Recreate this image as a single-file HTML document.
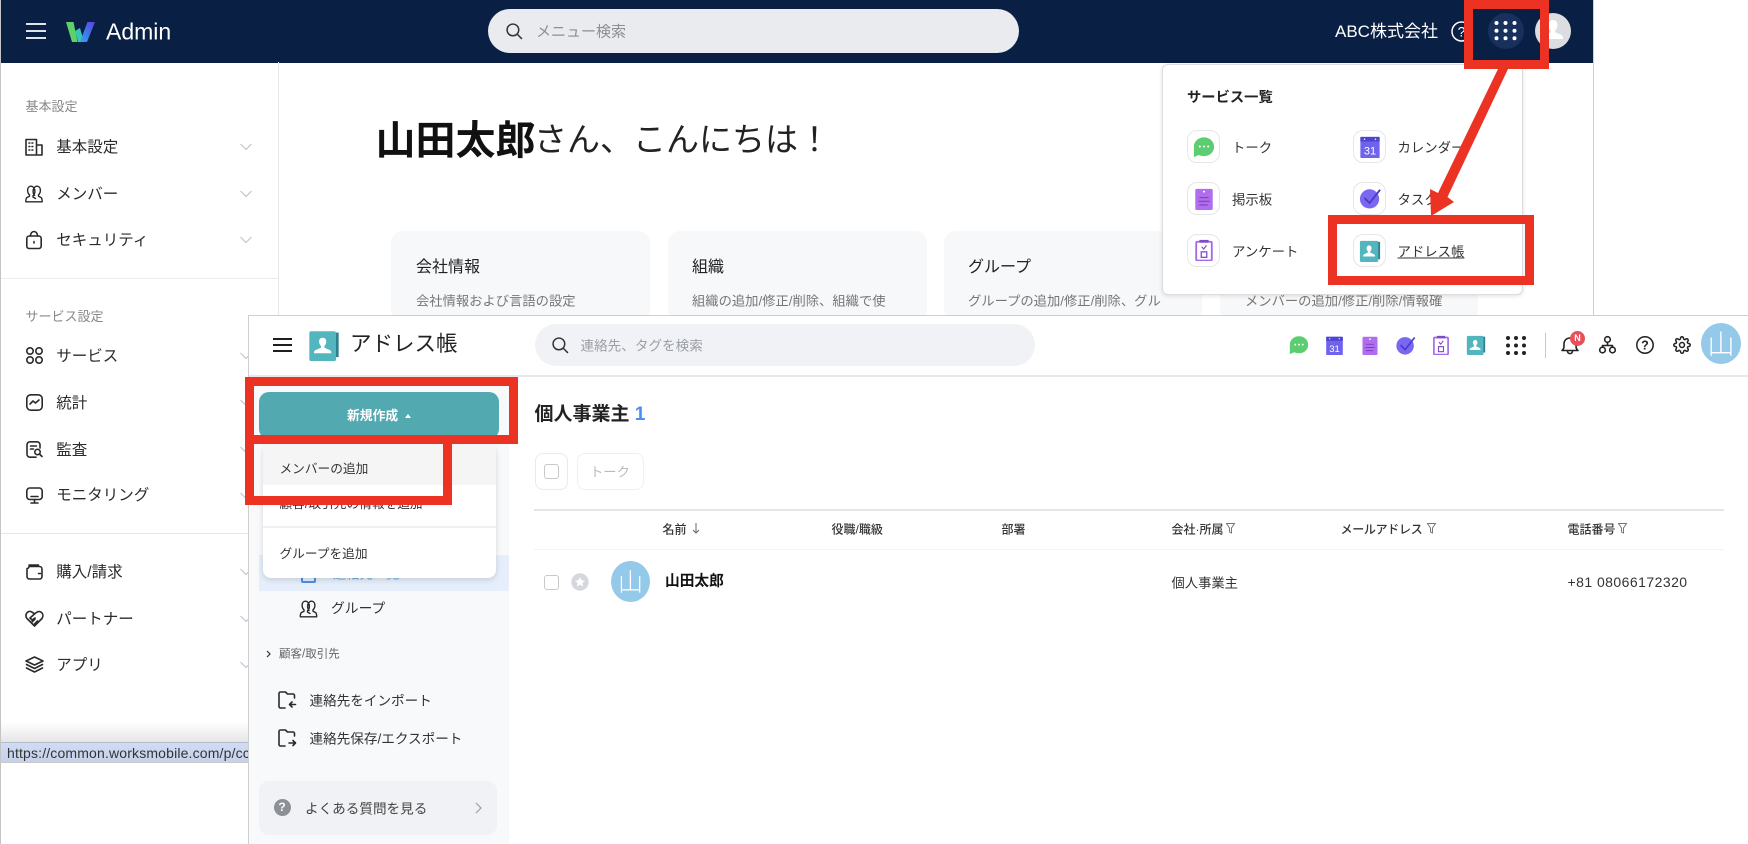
<!DOCTYPE html>
<html lang="ja"><head><meta charset="utf-8"><title>Admin</title>
<style>
html,body{margin:0;padding:0;background:#fff}
body{width:1748px;height:844px;overflow:hidden;position:relative;font-family:"Liberation Sans","Noto Sans CJK JP",sans-serif;color:#222}
.b{position:absolute;box-sizing:border-box}
.t{position:absolute;white-space:nowrap;transform:translateY(calc(-50% + 1.2px));line-height:1.3}
svg{position:absolute;overflow:visible}
.lbl{font-size:13px;color:#888}
.it{font-size:15.5px;color:#2b2b2b;left:56.300px}
.ic{fill:none;stroke:#2a2a2a;stroke-width:1.6;stroke-linecap:round;stroke-linejoin:round}
.card{position:absolute;top:231px;height:90px;background:#f7f8fa;border-radius:12px}
.ct{font-size:16px;color:#222}
.cs{font-size:13.3px;color:#777}
.tile{position:absolute;width:33px;height:33px;box-sizing:border-box;border:1px solid #e6e6e6;border-radius:10px;background:#fff}
.sl{font-size:13.4px;color:#333}
.red{position:absolute;box-sizing:border-box;border:9px solid #ec3223}
.th{font-size:12px;color:#333;font-weight:500;top:529px}
.cb{position:absolute;box-sizing:border-box;width:15px;height:15px;border:1px solid #c9c9c9;border-radius:3px;background:#fff}
</style></head><body>
<svg width="0" height="0" style="position:absolute">
<defs>
<symbol id="talk" viewBox="0 0 24 24"><path d="M12 1.500C5.600 1.500 1 6 1 11.600V23l5.400-2.300c1.600.8 3.500 1.200 5.600 1.200 6.400 0 11-4.500 11-10.200S18.400 1.500 12 1.500z" fill="#5ccd70"/><circle cx="7.500" cy="11.500" r="1.100" fill="#fff"/><circle cx="12" cy="11.500" r="1.100" fill="#fff"/><circle cx="16.500" cy="11.500" r="1.100" fill="#fff"/></symbol>
<symbol id="cal" viewBox="0 0 24 24"><rect x="1.500" y="1" width="21" height="23" rx="1" fill="#6f63ee"/><rect x="1.500" y="1" width="21" height="5" fill="#4f43cf"/><circle cx="6" cy="3.500" r=".8" fill="#fff"/><circle cx="18" cy="3.500" r=".8" fill="#fff"/><text x="12" y="20" font-size="12" text-anchor="middle" fill="#fff" font-family="Liberation Sans">31</text></symbol>
<symbol id="board" viewBox="0 0 24 24"><rect x="2.500" y="1" width="19" height="23" rx="1.500" fill="#b06eee"/><circle cx="12" cy="4" r="1.100" fill="#fff"/><path d="M7 10.500h10M6 14.500h12M7 18.500h9" stroke="#7b3fc4" stroke-width="1.200"/></symbol>
<symbol id="task" viewBox="0 0 24 24"><circle cx="11.500" cy="13" r="10.500" fill="#7a68f2"/><path d="M6 12l5.500 5.500L23 3" fill="none" stroke="#4a3cc4" stroke-width="2"/></symbol>
<symbol id="survey" viewBox="0 0 24 24"><rect x="3.500" y="3" width="17" height="20.500" rx="1" fill="#fff" stroke="#a668e8" stroke-width="2"/><rect x="7" y="1" width="10" height="3" fill="#7f4cc9"/><path d="M9.500 8.500l2.200 2.500 3-4" fill="none" stroke="#7f4cc9" stroke-width="1.300"/><rect x="9" y="14" width="6" height="6" fill="none" stroke="#7f4cc9" stroke-width="1.400"/></symbol>
<symbol id="addr" viewBox="0 0 24 24"><path d="M20 2h3v19h-3z" fill="#2f7f8f"/><rect x="1" y="1" width="20" height="23" rx="1.500" fill="#53b5bd"/><path d="M11 6c1.800 0 2.700 1.300 2.700 3 0 1.500-.6 2.600-1.400 3.300v1.400l4 1.800c.9.500 1.200 1.300 1.200 2.500H4.500c0-1.200.3-2 1.200-2.500l4-1.800v-1.400C8.900 11.600 8.300 10.500 8.300 9c0-1.700.9-3 2.700-3z" fill="#fff"/></symbol>
<symbol id="chev" viewBox="0 0 12 8"><path d="M.5 1L6 6.500 11.500 1" fill="none" stroke="#bfc2c7" stroke-width="1.100"/></symbol>
<symbol id="members" viewBox="0 0 18 18"><path d="M9 3.200C8.300 2 7.200 1.200 6 1.200 3.800 1.200 2.600 3 2.600 5.200c0 2 .8 3.600 1.900 4.600v1.400L2 12.500C1.200 13 .8 14 .8 16.800h16.400c0-2.800-.4-3.800-1.200-4.300l-2.500-1.300V9.800c1.100-1 1.900-2.600 1.900-4.600 0-2.200-1.200-4-3.400-4-1.200 0-2.300.8-3 2 .8 1 .9 2 .9 3 0 2-.8 3.600-1.900 4.600v1.300l3 1.600M9 3.200c-.8 1-.9 2-.9 3 0 2 .8 3.600 1.900 4.600" fill="none" stroke="#2a2a2a" stroke-width="1.400" stroke-linejoin="round"/></symbol>
</defs></svg>

<!-- ADMIN WINDOW -->
<div class="b" style="left:0;top:0;width:1px;height:844px;background:#c4c4c4"></div>
<div class="b" style="left:1593px;top:0;width:1px;height:316px;background:#cfcfcf"></div>
<div class="b" style="left:1px;top:0;width:1592px;height:62.500px;background:#0a1f44"></div>
<svg style="left:26px;top:23px" width="20" height="16"><path d="M0 1h20M0 8h20M0 15h20" stroke="#fff" stroke-width="1.800"/></svg>
<svg style="left:66px;top:21px" width="29" height="21"><defs><linearGradient id="wg" x1="0" y1="1" x2="1" y2="0"><stop offset="0" stop-color="#2fa7ee"/><stop offset="1" stop-color="#5a3fe0"/></linearGradient></defs><path d="M0 1h7.500l4 20H6z" fill="#5fd067"/><path d="M9 10l5-3 4 14h-6z" fill="#35c6b5"/><path d="M14 21h7L29 1h-7.500z" fill="url(#wg)"/></svg>
<div class="t" style="left:106px;top:31px;font-size:23px;color:#fff">Admin</div>
<div class="b" style="left:487.500px;top:9px;width:531px;height:44px;border-radius:22px;background:#e9ebef"></div>
<svg style="left:506px;top:23px" width="17" height="17" viewBox="0 0 16 16"><circle cx="6.500" cy="6.500" r="5.500" fill="none" stroke="#333" stroke-width="1.400"/><path d="M10.500 10.500L15 15" stroke="#333" stroke-width="1.400"/></svg>
<div class="t" style="left:536px;top:31px;font-size:15px;color:#8b8f96">メニュー検索</div>
<div class="t" style="left:1335px;top:30.500px;font-size:17px;color:#fff">ABC株式会社</div>
<svg style="left:1451px;top:21px" width="21" height="21"><circle cx="10.500" cy="10.500" r="9.500" fill="none" stroke="#fff" stroke-width="1.500"/><text x="10.500" y="15.500" font-size="14" text-anchor="middle" fill="#fff" font-family="Liberation Sans">?</text></svg>
<div class="b" style="left:1488px;top:13px;width:36px;height:36px;border-radius:50%;background:#17305c"></div>
<svg style="left:1494px;top:21px" width="24" height="20" fill="#fff"><circle cx="2.500" cy="2" r="2"/><circle cx="11.500" cy="2" r="2"/><circle cx="20.500" cy="2" r="2"/><circle cx="2.500" cy="9.700" r="2"/><circle cx="11.500" cy="9.700" r="2"/><circle cx="20.500" cy="9.700" r="2"/><circle cx="2.500" cy="17.300" r="2"/><circle cx="11.500" cy="17.300" r="2"/><circle cx="20.500" cy="17.300" r="2"/></svg>
<svg style="left:1535px;top:13px" width="36" height="36"><circle cx="18" cy="18" r="18" fill="#dcdde0"/><path d="M18 7c3 0 4.500 2.200 4.500 5 0 2.400-1 4.200-2.300 5.300v2l6 2.600c1.300.7 1.800 2 1.800 4.100H8c0-2.100.5-3.400 1.800-4.100l6-2.600v-2c-1.300-1.100-2.300-2.900-2.300-5.300 0-2.800 1.500-5 4.500-5z" fill="#fff"/></svg>

<!-- admin sidebar -->
<div class="b" style="left:278px;top:62px;width:1px;height:254px;background:#e8e8e8"></div>
<div class="b" style="left:1px;top:278px;width:277px;height:1px;background:#ececec"></div>
<div class="b" style="left:1px;top:533px;width:248px;height:1px;background:#e6e6e6"></div>
<div class="t lbl" style="left:25.500px;top:106px">基本設定</div>
<div class="t lbl" style="left:25.500px;top:315.500px">サービス設定</div>
<div class="t it" style="top:147px">基本設定</div>
<div class="t it" style="top:193.500px">メンバー</div>
<div class="t it" style="top:240px">セキュリティ</div>
<div class="t it" style="top:355.500px">サービス</div>
<div class="t it" style="top:403px">統計</div>
<div class="t it" style="top:449.500px">監査</div>
<div class="t it" style="top:495px">モニタリング</div>
<div class="t it" style="top:572px">購入/請求</div>
<div class="t it" style="top:618.500px">パートナー</div>
<div class="t it" style="top:664.500px">アプリ</div>
<svg style="left:240px;top:143px" width="12" height="8"><use href="#chev"/></svg>
<svg style="left:240px;top:190px" width="12" height="8"><use href="#chev"/></svg>
<svg style="left:240px;top:236px" width="12" height="8"><use href="#chev"/></svg>
<svg style="left:240px;top:352px" width="12" height="8"><use href="#chev"/></svg>
<svg style="left:240px;top:399px" width="12" height="8"><use href="#chev"/></svg>
<svg style="left:240px;top:446px" width="12" height="8"><use href="#chev"/></svg>
<svg style="left:240px;top:492px" width="12" height="8"><use href="#chev"/></svg>
<svg style="left:240px;top:568px" width="12" height="8"><use href="#chev"/></svg>
<svg style="left:240px;top:615px" width="12" height="8"><use href="#chev"/></svg>
<svg style="left:240px;top:661px" width="12" height="8"><use href="#chev"/></svg>
<!-- sidebar icons -->
<svg class="ic" style="left:25px;top:138px" width="18" height="18"><path d="M1 1.500h10.500V17H1zM11.500 7H17v10h-5.500"/><path d="M4 5h.8M7 5h.8M4 8.500h.8M7 8.500h.8M4 12h.8M7 12h.8"/></svg>
<svg style="left:25px;top:185px" width="18" height="18"><use href="#members"/></svg>
<svg class="ic" style="left:26px;top:231px" width="16" height="18"><rect x=".8" y="5" width="14.400" height="12.500" rx="2.500"/><path d="M4.500 5c0-6 7-6 7 0"/><path d="M8 10.500v1.500"/></svg>
<svg class="ic" style="left:26px;top:347px" width="17" height="17"><circle cx="4" cy="4" r="3.200"/><circle cx="13" cy="4" r="3.200"/><circle cx="4" cy="13" r="3.200"/><circle cx="13" cy="13" r="3.200"/></svg>
<svg class="ic" style="left:26px;top:394px" width="17" height="17"><rect x=".8" y=".8" width="15.400" height="15.400" rx="4"/><path d="M4 10l3-3 2.500 2L13 6"/></svg>
<svg class="ic" style="left:26px;top:441px" width="17" height="17"><path d="M10 16.200H4A3 3 0 011 13.200V3.800A3 3 0 014 .8h7a3 3 0 013 3V7"/><path d="M4.500 5h6M4.500 8h3"/><circle cx="11.500" cy="11" r="2.700"/><path d="M13.500 13l2.500 2.500"/></svg>
<svg class="ic" style="left:26px;top:487px" width="17" height="17"><rect x=".8" y="1" width="15.400" height="11.500" rx="3"/><path d="M5 9.500h7M8.500 12.500v3M5 16h7"/></svg>
<svg class="ic" style="left:26px;top:564px" width="17" height="16"><path d="M1 4.500V12.500A2.500 2.500 0 003.500 15h10a2.500 2.500 0 002.500-2.500V5A2.500 2.500 0 0013.500 2.500H3A2 2 0 011 4.500M3 1h9.500"/><path d="M12.500 9.500h2"/></svg>
<svg class="ic" style="left:25px;top:610px" width="19" height="17"><path d="M9.500 16L2 8.500C-1 4.500 3 0 6.500 1.800l3 2 2-1.300C15-.5 20 4 17 8.500z"/><path d="M9.500 4L5 8l2 2 3-2M7 12l3-3M9.500 14l3-3"/></svg>
<svg class="ic" style="left:25px;top:656px" width="19" height="17"><path d="M9.500 1L18 5l-8.500 4L1 5z"/><path d="M1.500 8.500l8 4 8-4M1.500 12l8 4 8-4"/></svg>

<!-- main -->
<div class="t" style="left:375.500px;top:140px;font-size:40px;font-weight:700;color:#111">山田太郎</div>
<div class="t" style="left:534px;top:139px;font-size:33px;color:#222">さん、こんにちは！</div>
<div class="card" style="left:391px;width:259px"></div>
<div class="card" style="left:668px;width:259px"></div>
<div class="card" style="left:944px;width:258px"></div>
<div class="card" style="left:1220px;width:258px"></div>
<div class="t ct" style="left:416px;top:267px">会社情報</div>
<div class="t cs" style="left:416px;top:300px">会社情報および言語の設定</div>
<div class="t ct" style="left:692px;top:267px">組織</div>
<div class="t cs" style="left:692px;top:300px">組織の追加/修正/削除、組織で使</div>
<div class="t ct" style="left:968px;top:267px">グループ</div>
<div class="t cs" style="left:968px;top:300px">グループの追加/修正/削除、グル</div>
<div class="t cs" style="left:1245px;top:300px">メンバーの追加/修正/削除/情報確</div>

<!-- service panel -->
<div class="b" style="left:1162px;top:64px;width:361px;height:231px;background:#fff;border:1px solid #ddd;border-radius:6px;box-shadow:0 1px 4px rgba(0,0,0,.12)"></div>
<div class="t" style="left:1187px;top:97px;font-size:14.300px;font-weight:700;color:#222">サービス一覧</div>
<div class="tile" style="left:1187px;top:130px"></div><svg style="left:1193px;top:136px" width="22" height="22" viewBox="0 0 24 24"><use href="#talk"/></svg>
<div class="tile" style="left:1353px;top:130px"></div><svg style="left:1358.500px;top:136px" width="22" height="22" viewBox="0 0 24 24"><use href="#cal"/></svg>
<div class="tile" style="left:1187px;top:182px"></div><svg style="left:1193px;top:188px" width="22" height="22" viewBox="0 0 24 24"><use href="#board"/></svg>
<div class="tile" style="left:1353px;top:182px"></div><svg style="left:1358.500px;top:187px" width="22" height="22" viewBox="0 0 24 24"><use href="#task"/></svg>
<div class="tile" style="left:1187px;top:234px"></div><svg style="left:1193px;top:239px" width="22" height="22" viewBox="0 0 24 24"><use href="#survey"/></svg>
<div class="tile" style="left:1353px;top:234px"></div><svg style="left:1359px;top:240px" width="22" height="22" viewBox="0 0 24 24"><use href="#addr"/></svg>
<div class="t sl" style="left:1232px;top:146.500px">トーク</div>
<div class="t sl" style="left:1397.500px;top:146.500px">カレンダー</div>
<div class="t sl" style="left:1232px;top:198.500px">掲示板</div>
<div class="t sl" style="left:1397.500px;top:198.500px">タスク</div>
<div class="t sl" style="left:1232px;top:250.500px">アンケート</div>
<div class="t sl" style="left:1397.500px;top:250.500px;text-decoration:underline">アドレス帳</div>

<!-- ADDRESS WINDOW -->
<div class="b" style="left:248px;top:315px;width:1500px;height:529px;background:#fff;border-top:1px solid #cfcfcf;border-left:1px solid #cfcfcf"></div>
<div class="b" style="left:249px;top:376px;width:260px;height:468px;background:#f8f9fb"></div>
<div class="b" style="left:249px;top:375px;width:1499px;height:2px;background:#e8e8e8"></div>
<svg style="left:273px;top:338px" width="19" height="14"><path d="M0 1h19M0 7h19M0 13h19" stroke="#1e1e1e" stroke-width="2"/></svg>
<svg style="left:308px;top:330px" width="32" height="31" viewBox="0 0 24 24" preserveAspectRatio="none"><use href="#addr"/></svg>
<div class="t" style="left:350px;top:344px;font-size:21.500px;color:#222">アドレス帳</div>
<div class="b" style="left:535px;top:324px;width:500px;height:42px;border-radius:21px;background:#f1f2f6"></div>
<svg style="left:552px;top:337px" width="17" height="17" viewBox="0 0 16 16"><circle cx="6.500" cy="6.500" r="5.500" fill="none" stroke="#333" stroke-width="1.400"/><path d="M10.500 10.500L15 15" stroke="#333" stroke-width="1.400"/></svg>
<div class="t" style="left:580.500px;top:345px;font-size:13.600px;color:#9a9ea6">連絡先、タグを検索</div>
<svg style="left:1289px;top:335px" width="20" height="20" viewBox="0 0 24 24"><use href="#talk"/></svg>
<svg style="left:1325px;top:336px" width="19" height="19" viewBox="0 0 24 24"><use href="#cal"/></svg>
<svg style="left:1360px;top:336px" width="20" height="19" viewBox="0 0 24 24"><use href="#board"/></svg>
<svg style="left:1395px;top:335px" width="21" height="20" viewBox="0 0 24 24"><use href="#task"/></svg>
<svg style="left:1431px;top:335px" width="20" height="20" viewBox="0 0 24 24"><use href="#survey"/></svg>
<svg style="left:1466px;top:335px" width="20" height="20" viewBox="0 0 24 24"><use href="#addr"/></svg>
<svg style="left:1506px;top:336px" width="20" height="20" fill="#222"><circle cx="2" cy="2" r="2"/><circle cx="10" cy="2" r="2"/><circle cx="18" cy="2" r="2"/><circle cx="2" cy="9.500" r="2"/><circle cx="10" cy="9.500" r="2"/><circle cx="18" cy="9.500" r="2"/><circle cx="2" cy="17" r="2"/><circle cx="10" cy="17" r="2"/><circle cx="18" cy="17" r="2"/></svg>
<div class="b" style="left:1545px;top:333px;width:1px;height:25px;background:#c8c8c8"></div>
<svg class="ic" style="left:1561px;top:336px;stroke:#222" width="18" height="19"><path d="M1 14.500c2-1.500 2-3 2-6.500 0-3.500 2.500-6 6-6s6 2.500 6 6c0 3.500 0 5 2 6.500z"/><path d="M6.500 15c0 3.500 5 3.500 5 0"/></svg>
<div class="b" style="left:1570px;top:331px;width:15px;height:15px;border-radius:50%;background:#e8505b;color:#fff;font-size:9px;line-height:15px;text-align:center;font-weight:700">N</div>
<svg class="ic" style="left:1599px;top:336px;stroke:#222" width="17" height="18"><circle cx="8.500" cy="3.500" r="2.800"/><circle cx="3.500" cy="14" r="2.800"/><circle cx="13.500" cy="14" r="2.800"/><path d="M8.500 6.300V9M3.500 11.200V9.500h10v1.700"/></svg>
<svg style="left:1636px;top:336px" width="18" height="18"><circle cx="9" cy="9" r="8.200" fill="none" stroke="#222" stroke-width="1.500"/><text x="9" y="13.500" font-size="12.500" text-anchor="middle" fill="#222" font-family="Liberation Sans" font-weight="700">?</text></svg>
<svg class="ic" style="left:1673px;top:336px;stroke:#222;stroke-width:2" width="18" height="18" viewBox="0 0 24 24"><circle cx="12" cy="12" r="3.300"/><path d="M19.400 15a1.650 1.650 0 0 0 .33 1.820l.06.06a2 2 0 0 1 0 2.830 2 2 0 0 1-2.830 0l-.06-.06a1.650 1.650 0 0 0-1.820-.33 1.650 1.650 0 0 0-1 1.510V21a2 2 0 0 1-2 2 2 2 0 0 1-2-2v-.09A1.650 1.650 0 0 0 9 19.400a1.650 1.650 0 0 0-1.820.33l-.06.06a2 2 0 0 1-2.830 0 2 2 0 0 1 0-2.830l.06-.06a1.650 1.650 0 0 0 .33-1.820 1.650 1.650 0 0 0-1.510-1H3a2 2 0 0 1-2-2 2 2 0 0 1 2-2h.09A1.650 1.650 0 0 0 4.600 9a1.650 1.650 0 0 0-.33-1.820l-.06-.06a2 2 0 0 1 0-2.830 2 2 0 0 1 2.830 0l.06.06a1.650 1.650 0 0 0 1.820.33H9a1.650 1.650 0 0 0 1-1.510V3a2 2 0 0 1 2-2 2 2 0 0 1 2 2v.09a1.650 1.650 0 0 0 1 1.510 1.650 1.650 0 0 0 1.820-.33l.06-.06a2 2 0 0 1 2.830 0 2 2 0 0 1 0 2.830l-.06.06a1.650 1.650 0 0 0-.33 1.820V9a1.650 1.650 0 0 0 1.510 1H21a2 2 0 0 1 2 2 2 2 0 0 1-2 2h-.09a1.650 1.650 0 0 0-1.510 1z"/></svg>
<div class="b" style="left:1701px;top:323px;width:40px;height:41px;border-radius:50%;background:#94c9ea;color:#fff;text-align:center;font-size:27px;line-height:40px;font-family:'Noto Sans CJK JP',sans-serif;font-weight:300">山</div>

<!-- address sidebar -->
<div class="b" style="left:259px;top:392px;width:240px;height:47px;border-radius:10px;background:#52a9b0"></div>
<div class="t" style="left:347px;top:415px;font-size:12.800px;font-weight:700;color:#fff">新規作成</div>
<svg style="left:405px;top:414px" width="6" height="4"><path d="M0 4L3 0l3 4z" fill="#fff"/></svg>
<div class="b" style="left:259px;top:555px;width:250px;height:36px;background:#e5eefa"></div>
<div class="b" style="left:301px;top:570px;width:15px;height:13px;border:2px solid #4a90e2;border-radius:2px"></div>
<div class="t" style="left:333px;top:573px;font-size:13.300px;color:#6aa5ea">連絡先一覧</div>
<svg style="left:299px;top:600px" width="19" height="18" viewBox="0 0 18 18"><use href="#members"/></svg>
<div class="t" style="left:331px;top:608px;font-size:13.800px;color:#333">グループ</div>
<svg style="left:266px;top:650px" width="5" height="8"><path d="M1 1l3 3-3 3" fill="none" stroke="#333" stroke-width="1.200"/></svg>
<div class="t" style="left:279px;top:653.500px;font-size:11.500px;color:#666">顧客/取引先</div>
<svg class="ic" style="left:278px;top:691px" width="19" height="18"><path d="M16.500 7V4.500a1.500 1.500 0 00-1.500-1.500H9.500L7.500 1H2.500A1.500 1.500 0 001 2.500v13A1.500 1.500 0 002.500 17H7"/><path d="M17.500 13.500h-6M14 11l-2.500 2.500L14 16"/></svg>
<svg class="ic" style="left:278px;top:729px" width="19" height="18"><path d="M16.500 7V4.500a1.500 1.500 0 00-1.500-1.500H9.500L7.500 1H2.500A1.500 1.500 0 001 2.500v13A1.500 1.500 0 002.500 17H7"/><path d="M11 14h6M15 11.500l2.500 2.500-2.500 2.500"/></svg>
<div class="t" style="left:309.500px;top:700px;font-size:13.600px;color:#333">連絡先をインポート</div>
<div class="t" style="left:309.500px;top:738px;font-size:13.600px;color:#333">連絡先保存/エクスポート</div>
<div class="b" style="left:259px;top:781px;width:238px;height:54px;border-radius:10px;background:#f1f2f5"></div>
<div class="b" style="left:273.500px;top:799px;width:17px;height:17px;border-radius:50%;background:#8d9096;color:#fff;font-size:12px;font-weight:700;line-height:17px;text-align:center">?</div>
<div class="t" style="left:305px;top:807.500px;font-size:13.600px;color:#444">よくある質問を見る</div>
<svg style="left:475px;top:802px" width="7" height="12"><path d="M1 1l5 5-5 5" fill="none" stroke="#999" stroke-width="1.100"/></svg>

<!-- dropdown -->
<div class="b" style="left:263px;top:444px;width:233px;height:134px;background:#fff;border-radius:8px;box-shadow:0 2px 6px rgba(0,0,0,.14)"></div>
<div class="b" style="left:263px;top:444px;width:233px;height:41px;background:#f5f5f5"></div>
<div class="t" style="left:279.500px;top:468px;font-size:12.700px;color:#333">メンバーの追加</div>
<div class="t" style="left:279.500px;top:503px;font-size:12.700px;color:#333">顧客/取引先の情報を追加</div>
<div class="b" style="left:263px;top:526px;width:233px;height:2px;background:#f0f0f0"></div>
<div class="t" style="left:279.500px;top:552.500px;font-size:12.700px;color:#333">グループを追加</div>

<!-- content -->
<div class="t" style="left:534.500px;top:414px;font-size:19px;font-weight:700;color:#222">個人事業主 <span style="color:#4a8ef0">1</span></div>
<div class="b" style="left:535px;top:453px;width:33px;height:36.500px;border:1px solid #eaeaea;border-radius:8px"></div>
<div class="cb" style="left:544px;top:464px"></div>
<div class="b" style="left:577px;top:453px;width:67px;height:36.500px;border:1px solid #f0f0f0;border-radius:8px"></div>
<div class="t" style="left:590px;top:471px;font-size:13.300px;color:#bbb">トーク</div>
<div class="b" style="left:534px;top:509px;width:1190px;height:1.500px;background:#e5e5e5"></div>
<div class="b" style="left:534px;top:548.500px;width:1190px;height:1.500px;background:#f3f3f3"></div>
<div class="t th" style="left:662.500px">名前</div>
<svg style="left:692px;top:523px" width="8" height="11"><path d="M4 0v10M1 7l3 3 3-3" fill="none" stroke="#666" stroke-width="1"/></svg>
<div class="t th" style="left:831.500px">役職/職級</div>
<div class="t th" style="left:1001.500px">部署</div>
<div class="t th" style="left:1171.500px">会社·所属</div>
<div class="t th" style="left:1340.500px;letter-spacing:-.3px">メールアドレス</div>
<div class="t th" style="left:1567.500px">電話番号</div>
<svg style="left:1226px;top:523px" width="9" height="11"><path d="M.5.5h8L5.500 5v5l-2-1V5z" fill="none" stroke="#777" stroke-width="1"/></svg>
<svg style="left:1427px;top:523px" width="9" height="11"><path d="M.5.5h8L5.500 5v5l-2-1V5z" fill="none" stroke="#777" stroke-width="1"/></svg>
<svg style="left:1618px;top:523px" width="9" height="11"><path d="M.5.5h8L5.500 5v5l-2-1V5z" fill="none" stroke="#777" stroke-width="1"/></svg>
<div class="cb" style="left:544px;top:575px"></div>
<svg style="left:571px;top:573px" width="18" height="18"><circle cx="9" cy="9" r="8.700" fill="#d5d7dc"/><path d="M9 4l1.500 3.200 3.500.4-2.600 2.400.7 3.500L9 11.800l-3.100 1.700.7-3.500L4 7.600l3.500-.4z" fill="#fff"/></svg>
<div class="b" style="left:611px;top:561px;width:39px;height:41px;border-radius:50%;background:#94c9ea;color:#fff;text-align:center;font-size:25px;line-height:40px;font-family:'Noto Sans CJK JP',sans-serif;font-weight:300">山</div>
<div class="t" style="left:665px;top:580.500px;font-size:14.700px;font-weight:700;color:#111">山田太郎</div>
<div class="t" style="left:1171.500px;top:582px;font-size:13.300px;color:#333">個人事業主</div>
<div class="t" style="left:1567.500px;top:581px;font-size:14px;letter-spacing:.45px;color:#333">+81 08066172320</div>

<!-- tooltip -->
<div class="b" style="left:1px;top:722px;width:247px;height:20px;background:linear-gradient(#fff,#e6e6e6)"></div>
<div class="b" style="left:1px;top:741.500px;width:247px;height:21.500px;background:linear-gradient(#d0dcf3,#c6d2ea);border-top:1px solid #b4bccb;border-bottom:1px solid #c8c8c8;overflow:hidden"><span style="position:absolute;left:6px;top:1px;font-size:14px;line-height:19px;letter-spacing:.16px;color:#333;white-space:nowrap">https://common.worksmobile.com/p/cc</span></div>

<!-- red annotations -->
<div class="red" style="left:1464px;top:0;width:85px;height:69px"></div>
<div class="red" style="left:1328px;top:215px;width:206px;height:70px"></div>
<div class="red" style="left:245px;top:377px;width:273px;height:67px"></div>
<div class="red" style="left:245px;top:444px;width:207px;height:61px;border-top:0"></div>
<svg style="left:0;top:0" width="1748" height="844"><path d="M1498 69H1508L1447.500 197 1454 202 1431 216 1430 189 1438 193z" fill="#ec3223"/></svg>
</body></html>
